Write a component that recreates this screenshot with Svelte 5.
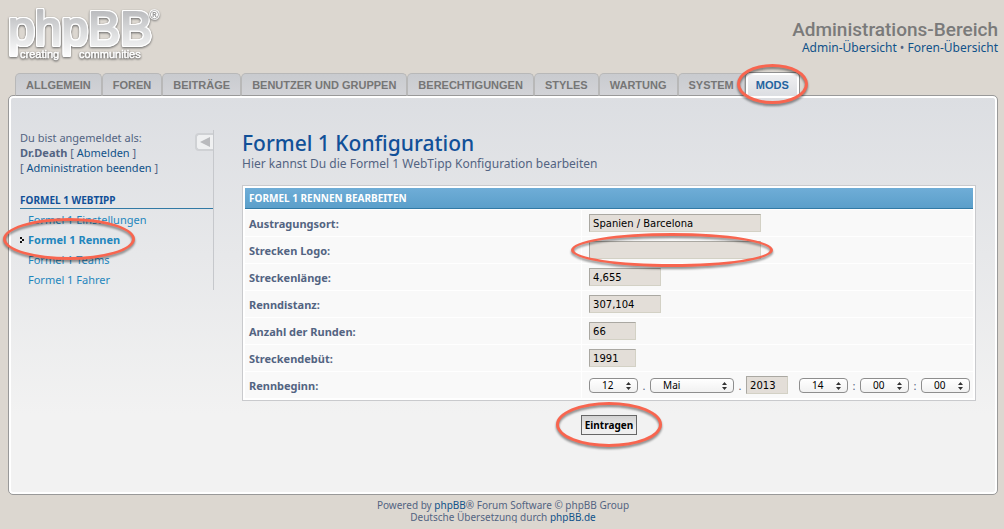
<script>
  const tabs = ['Allgemein', 'Foren', 'Beiträge', 'Benutzer und Gruppen', 'Berechtigungen', 'Styles', 'Wartung', 'System', 'Mods'];
  const activeTab = 'Mods';
  const menu = ['Formel 1 Einstellungen', 'Formel 1 Rennen', 'Formel 1 Teams', 'Formel 1 Fahrer'];
  const activeItem = 'Formel 1 Rennen';
  const fields = [
    { id: 'ort', label: 'Austragungsort:', value: 'Spanien / Barcelona', size: 'long' },
    { id: 'logo', label: 'Strecken Logo:', value: '', size: 'long', marked: true },
    { id: 'laenge', label: 'Streckenlänge:', value: '4,655', size: 'medium' },
    { id: 'distanz', label: 'Renndistanz:', value: '307,104', size: 'medium' },
    { id: 'runden', label: 'Anzahl der Runden:', value: '66', size: 'short' },
    { id: 'debuet', label: 'Streckendebüt:', value: '1991', size: 'short' }
  ];
</script>

{#snippet picker(id, label, value, wide)}
  <span class="picker" class:wide>
    <select {id} aria-label={label}><option>{value}</option></select>
    <svg class="arrows" viewBox="0 0 5 8" aria-hidden="true">
      <path d="M0 3 L2.5 0 L5 3 Z M0 5 L2.5 8 L5 5 Z" fill="#333" />
    </svg>
  </span>
{/snippet}

<div class="wrap">
  <header>
    <a class="logo" href="#top" aria-label="phpBB creating communities">
      <svg width="156" height="60" viewBox="0 0 156 60">
        <defs>
          <linearGradient id="silver" gradientUnits="userSpaceOnUse" x1="0" y1="8" x2="0" y2="54">
            <stop offset="0" stop-color="#bcbdc0" />
            <stop offset="0.55" stop-color="#e2e3e4" />
            <stop offset="1" stop-color="#ffffff" />
          </linearGradient>
        </defs>
        <text class="brand" x="0" y="41">phpBB</text>
        <text class="reg" x="142" y="15">®</text>
        <g class="motto">
          <text x="12" y="54">creating</text>
          <text x="71" y="54">communities</text>
        </g>
      </svg>
    </a>
    <div class="area">
      <h1>Administrations-Bereich</h1>
      <p><a href="#admin">Admin-Übersicht</a> • <a href="#foren">Foren-Übersicht</a></p>
    </div>
  </header>

  <nav class="tabs">
    {#each tabs as tab}
      <a href="#tab" class:active={tab === activeTab}>
        {tab}
        {#if tab === activeTab}<span class="ring ring-tab"></span>{/if}
      </a>
    {/each}
  </nav>

  <div class="panel">
    <aside>
      <button class="toggle" aria-label="Menü ausblenden">
        <svg width="10" height="10" viewBox="0 0 10 10"><path d="M0 5 L10 0 V10 Z" fill="#b9babd" /></svg>
      </button>
      <p class="user">
        Du bist angemeldet als:<br />
        <strong>Dr.Death</strong> [&nbsp;<a href="#logout">Abmelden</a>&nbsp;]<br />
        [&nbsp;<a href="#end">Administration beenden</a>&nbsp;]
      </p>
      <h2>Formel 1 WebTipp</h2>
      <ul>
        {#each menu as item}
          <li class:current={item === activeItem}>
            {#if item === activeItem}
              <svg class="mark" width="4" height="6" viewBox="0 0 4 6" shape-rendering="crispEdges" aria-hidden="true">
                <path d="M0 0h2v2h-2z M2 2h2v2h-2z M0 4h2v2h-2z" fill="#111" />
              </svg>
            {/if}
            <a href="#item">{item}</a>
            {#if item === activeItem}<span class="ring ring-item"></span>{/if}
          </li>
        {/each}
      </ul>
    </aside>

    <main>
      <h2>Formel 1 Konfiguration</h2>
      <p class="intro">Hier kannst Du die Formel 1 WebTipp Konfiguration bearbeiten</p>
      <form>
        <table>
          <thead>
            <tr><th colspan="2">Formel 1 Rennen bearbeiten</th></tr>
          </thead>
          <tbody>
            {#each fields as f}
              <tr>
                <td class="name"><label for={f.id}>{f.label}</label></td>
                <td>
                  <div class="row">
                    <input id={f.id} class={f.size} type="text" value={f.value} />
                    {#if f.marked}<span class="ring ring-field"></span>{/if}
                  </div>
                </td>
              </tr>
            {/each}
            <tr>
              <td class="name"><label for="tag">Rennbeginn:</label></td>
              <td>
                <div class="row">
                  {@render picker('tag', 'Tag', '12', false)}
                  <span class="sep">.</span>
                  {@render picker('monat', 'Monat', 'Mai', true)}
                  <span class="sep">.</span>
                  <input class="year" type="text" value="2013" aria-label="Jahr" />
                  <span class="space"></span>
                  {@render picker('stunde', 'Stunde', '14', false)}
                  <span class="sep">:</span>
                  {@render picker('minute', 'Minute', '00', false)}
                  <span class="sep">:</span>
                  {@render picker('sekunde', 'Sekunde', '00', false)}
                </div>
              </td>
            </tr>
          </tbody>
        </table>
        <div class="submit">
          <span class="anchor">
            <button type="button">Eintragen</button>
            <span class="ring ring-submit"></span>
          </span>
        </div>
      </form>
    </main>
  </div>

  <footer>
    Powered by <a href="#phpbb">phpBB</a>® Forum Software © phpBB Group<br />
    Deutsche Übersetzung durch <a href="#phpbbde">phpBB.de</a>
  </footer>
</div>

<style>
  :global(body) {
    margin: 0;
    background: #dcd7d0;
    color: #536482;
    font-family: "Noto Sans", "Open Sans", sans-serif;
    font-size: 11px;
  }
  h1, h2, p, ul { margin: 0; padding: 0; font-weight: normal; }
  a { color: #105289; text-decoration: none; }
  .wrap { padding: 0 6px 0 8px; }

  header { display: flex; justify-content: space-between; height: 72px; }
  .logo { display: block; padding-top: 4px; }
  .logo svg { display: block; overflow: visible; }
  .brand {
    font: 48px "Liberation Sans", sans-serif;
    fill: url(#silver);
    stroke: url(#silver);
    stroke-width: 2px;
    stroke-linejoin: round;
    filter: drop-shadow(1px 0 #fff) drop-shadow(-1px 0 #fff) drop-shadow(0 1px #fff) drop-shadow(0 -1px #fff) drop-shadow(0 1px 1px #666);
  }
  .reg { font: bold 12px "Liberation Sans", sans-serif; fill: #999; stroke: #fff; stroke-width: 2px; paint-order: stroke; filter: drop-shadow(0 1px 1px #777); }
  .motto { font: 11px "Liberation Sans", sans-serif; fill: #fff; stroke: #fff; stroke-width: 0.5px; filter: drop-shadow(0 1px 1px #444); }
  .area { padding-top: 18px; text-align: right; font-size: 12px; line-height: 14px; }
  .area h1 { color: #7a7a7a; font: 500 19px/23px Roboto, sans-serif; }

  .tabs { display: flex; height: 24px; align-items: flex-end; padding-left: 7px; margin-bottom: -1px; }
  .tabs a {
    position: relative;
    box-sizing: border-box;
    height: 23px;
    padding: 0 10px;
    border: 1px solid #b8b8b8;
    border-bottom-color: #999;
    border-radius: 5px 5px 0 0;
    background: linear-gradient(#c9cbcf, #d2d3d7);
    color: #767676;
    font: bold 11px/23px "Liberation Sans", sans-serif;
    text-transform: uppercase;
    white-space: nowrap;
  }
  .tabs a.active {
    z-index: 2;
    height: 24px;
    border: 1px solid #8f8f8f;
    border-bottom: 0;
    box-shadow: inset 2px 2px #fff, inset -2px 0 #fff;
    background: linear-gradient(#f0f0f2, #dcdee2);
    color: #23649f;
    line-height: 24px;
  }

  .panel {
    display: flex;
    gap: 28px;
    min-height: 364px;
    padding: 34px 21px 0 9px;
    border: 1px solid #999;
    border-radius: 5px;
    box-shadow: inset 0 0 0 2px #fff;
    background: linear-gradient(#dcdee2, #f2f2f2 80%);
  }
  aside { position: relative; box-sizing: border-box; width: 196px; height: 160px; padding-left: 2px; border-right: 1px solid #c6c8cc; }
  .toggle {
    position: absolute; right: 0; top: 3px;
    display: flex; align-items: center; justify-content: center;
    box-sizing: border-box; width: 18px; height: 18px; padding: 0;
    border: 2px solid #cfd1d4; border-right: 0; border-radius: 4px 0 0 4px;
    background: #eff0f1;
  }
  .user { line-height: 15px; }
  aside h2 {
    margin-top: 18px;
    border-bottom: 1px solid #327aa5;
    color: #115098;
    font-size: 10px;
    font-weight: bold;
    line-height: 15px;
    text-transform: uppercase;
  }
  ul { list-style: none; padding-top: 1px; }
  li { position: relative; padding-left: 8px; line-height: 20px; }
  li a { color: #1f86bd; }
  .current { font-weight: bold; }
  .mark { position: absolute; left: 0; top: 7px; }

  main { flex: 1; min-width: 0; }
  main h2 { color: #115098; font-size: 21px; font-weight: 500; line-height: 26px; }
  .intro { font-size: 12px; line-height: 15px; }
  table {
    width: 100%;
    margin-top: 14px;
    padding: 2px;
    border: 1px solid #c9cacd;
    border-spacing: 0;
    background: #fff;
  }
  th {
    height: 20px;
    padding: 0 4px;
    border-bottom: 1px solid #327aa5;
    background: linear-gradient(#6fadd7, #5b9fca);
    color: #fff;
    font-size: 10px;
    line-height: 20px;
    text-align: left;
    text-transform: uppercase;
  }
  td { height: 26px; padding: 0 0 0 7px; border-top: 1px solid #fff; background: #f9f9f9; }
  td.name { width: 46.3%; box-sizing: border-box; padding-left: 4px; border-right: 1px solid #fff; font-weight: bold; }
  .row { position: relative; display: flex; align-items: center; height: 26px; }
  input {
    box-sizing: border-box;
    height: 18px;
    padding: 0 3px;
    border: 1px solid #d3d1c5;
    border-top-color: #aaa8a2;
    border-left-color: #aaa8a2;
    border-radius: 0;
    background: #e3ded8;
    color: #000;
    font: 10px "DejaVu Sans", sans-serif;
  }
  .long { width: 172px; }
  .medium { width: 72px; }
  .short { width: 47px; }
  .year { width: 42px; }
  .sep { width: 12px; text-align: center; }
  .space { width: 11px; }
  .picker { position: relative; width: 49px; height: 15px; }
  .picker.wide { width: 84px; }
  select {
    display: block;
    appearance: none;
    box-sizing: border-box;
    width: 100%;
    height: 15px;
    padding: 0 12px;
    border: 1px solid #8e8e8e;
    border-radius: 4px;
    background: linear-gradient(#fff, #f1f1f1);
    color: #000;
    font: 10px/13px "Noto Sans", sans-serif;
  }
  .arrows { position: absolute; right: 7px; top: 4px; width: 5px; height: 8px; }

  .submit { display: flex; justify-content: center; padding: 14px 0 0; }
  .anchor { position: relative; }
  .submit button {
    display: block;
    height: 20px;
    padding: 0 3px;
    border: 1px solid #666;
    background: linear-gradient(#d2d2d2, #efefef 70%);
    color: #000;
    font: bold 10px/18px "Noto Sans", sans-serif;
  }

  footer { padding-top: 4px; font-size: 10px; line-height: 12px; text-align: center; }

  .ring {
    position: absolute;
    z-index: 3;
    border: 3px solid #f8654f;
    border-radius: 50%;
    filter: drop-shadow(0 2px 1px rgba(0, 0, 0, 0.45));
    pointer-events: none;
  }
  .ring-tab { inset: -9px -9px -8px; }
  .ring-item { inset: -12px 78px -10px -17px; }
  .ring-field { left: -18px; top: -4px; width: 196px; height: 28px; }
  .ring-submit { inset: -13px -25px -12px; }
</style>
